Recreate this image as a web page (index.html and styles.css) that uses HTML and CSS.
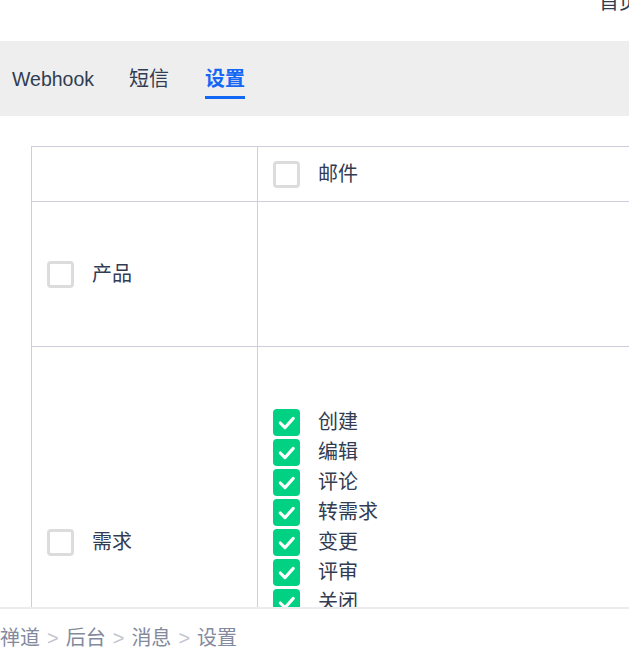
FILE: index.html
```html
<!DOCTYPE html>
<html lang="zh-CN">
<head>
    <meta charset="UTF-8">
    <title>消息设置</title>
    <link rel="stylesheet" href="styles.css">
</head>
<body>
    <div class="topbar">
        <span class="home-link">首页</span>
    </div>

    <div class="tabs">
        <div class="tab">Webhook</div>
        <div class="tab">短信</div>
        <div class="tab active">设置</div>
    </div>

    <div class="panel">
        <table class="setting-table">
            <tr class="head-row">
                <td class="col-module"></td>
                <td>
                    <label class="check"><span class="box"></span><span>邮件</span></label>
                </td>
            </tr>
            <tr class="row-product">
                <td class="col-module">
                    <label class="check"><span class="box"></span><span>产品</span></label>
                </td>
                <td></td>
            </tr>
            <tr class="row-story">
                <td class="col-module">
                    <label class="check"><span class="box"></span><span>需求</span></label>
                </td>
                <td class="actions">
                    <label class="check checked"><span class="box"><svg viewBox="0 0 26 26"><polyline points="7,13.5 11.5,18 19.5,9" /></svg></span><span>创建</span></label>
                    <label class="check checked"><span class="box"><svg viewBox="0 0 26 26"><polyline points="7,13.5 11.5,18 19.5,9" /></svg></span><span>编辑</span></label>
                    <label class="check checked"><span class="box"><svg viewBox="0 0 26 26"><polyline points="7,13.5 11.5,18 19.5,9" /></svg></span><span>评论</span></label>
                    <label class="check checked"><span class="box"><svg viewBox="0 0 26 26"><polyline points="7,13.5 11.5,18 19.5,9" /></svg></span><span>转需求</span></label>
                    <label class="check checked"><span class="box"><svg viewBox="0 0 26 26"><polyline points="7,13.5 11.5,18 19.5,9" /></svg></span><span>变更</span></label>
                    <label class="check checked"><span class="box"><svg viewBox="0 0 26 26"><polyline points="7,13.5 11.5,18 19.5,9" /></svg></span><span>评审</span></label>
                    <label class="check checked"><span class="box"><svg viewBox="0 0 26 26"><polyline points="7,13.5 11.5,18 19.5,9" /></svg></span><span>关闭</span></label>
                    <label class="check checked"><span class="box"><svg viewBox="0 0 26 26"><polyline points="7,13.5 11.5,18 19.5,9" /></svg></span><span>激活</span></label>
                    <label class="check checked"><span class="box"><svg viewBox="0 0 26 26"><polyline points="7,13.5 11.5,18 19.5,9" /></svg></span><span>删除</span></label>
                </td>
            </tr>
        </table>
    </div>

    <div class="footer">
        <span>禅道</span><span class="sep">&gt;</span><span>后台</span><span class="sep">&gt;</span><span>消息</span><span class="sep">&gt;</span><span>设置</span>
    </div>
</body>
</html>
```

FILE: styles.css
```css
* {
    margin: 0;
    padding: 0;
    box-sizing: border-box;
}

html, body {
    overflow: hidden;
}

body {
    width: 629px;
    font-family: "Liberation Sans", "Noto Sans CJK SC", sans-serif;
    font-size: 20px;
    color: #313c52;
    background-color: #ffffff;
}

.topbar {
    height: 41px;
    white-space: nowrap;
    padding-left: 599px;
}

.home-link {
    display: inline-block;
    margin-top: -8px;
    line-height: 20px;
    vertical-align: top;
}

.tabs {
    display: flex;
    gap: 35px;
    padding: 26px 0 17px 12px;
    background-color: #eeeeee;
}

.tab {
    line-height: 24px;
    padding-bottom: 5px;
    border-bottom: 3px solid transparent;
}

.tab:first-child {
    font-size: 19.5px;
}

.tab.active {
    margin-left: 1px;
    color: #1466f5;
    font-weight: bold;
    border-bottom-color: #1466f5;
}

.panel {
    background-color: #ffffff;
    border-radius: 4px 0 0 0;
    margin-left: 1px;
    padding: 30px 0 0 30px;
    width: 900px;
}

.setting-table {
    border-collapse: collapse;
    width: 870px;
}

.setting-table td {
    border: 1px solid #cdcedb;
    padding: 0 15px;
    vertical-align: middle;
}

.col-module {
    width: 226px;
}

.head-row td {
    height: 55px;
}

.row-product td {
    height: 145px;
}

.actions {
    padding: 60px 15px !important;
}

.check {
    display: flex;
    align-items: center;
    height: 30px;
    line-height: 30px;
}

.box {
    width: 27px;
    height: 27px;
    border: 3px solid #dcdcdc;
    border-radius: 4px;
    margin-right: 18px;
    flex-shrink: 0;
}

.checked .box {
    border: none;
    background-color: #00d182;
}

.box svg {
    display: block;
    width: 27px;
    height: 27px;
}

.box polyline {
    fill: none;
    stroke: #ffffff;
    stroke-width: 3;
    stroke-linecap: round;
    stroke-linejoin: round;
}

.footer {
    position: fixed;
    left: 0;
    right: 0;
    bottom: 0;
    height: 49px;
    line-height: 58px;
    background-color: #ffffff;
    border-top: 2px solid #ebebf0;
    color: #838a9d;
    white-space: nowrap;
}

.sep {
    display: inline-block;
    margin: 0 7px;
    color: #c3c6ce;
}
```
